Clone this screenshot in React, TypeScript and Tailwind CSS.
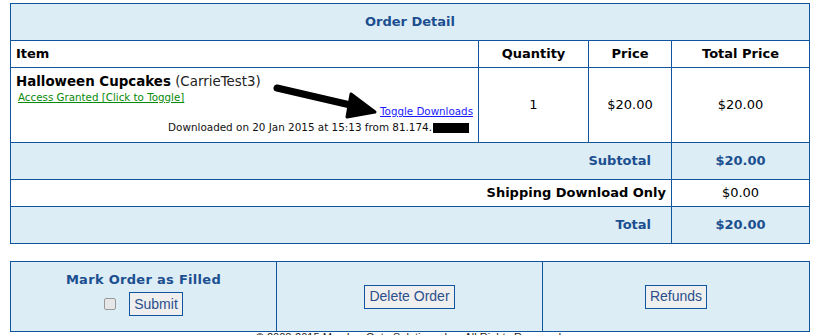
import React from "react";

const cell = "border border-[#0f55a0]";

const Arrow: React.FC = () => (
  <svg
    className="absolute left-[251px] top-[6px]"
    width="115"
    height="45"
    viewBox="0 0 115 45"
  >
    <path
      d="M10 14 L92 33"
      stroke="#000"
      strokeWidth="7"
      strokeLinecap="round"
      fill="none"
    />
    <path d="M84 20 L108 38 L80 43 Z" fill="#000" stroke="#000" strokeWidth="3" strokeLinejoin="round" />
  </svg>
);

const btn =
  "h-[24px] px-[4px] border border-[#0f55a0] bg-[#efefef] font-['Liberation_Sans',Arial,sans-serif] text-[14px] text-[#2a4f8c]";

const App: React.FC = () => {
  return (
    <div className="w-[818px] h-[335px] overflow-hidden bg-white font-['DejaVu_Sans',Verdana,sans-serif] text-[13px] text-black">
      <div className="pt-[3px] pl-[10px]">
        <table className="w-[800px] border-collapse">
          <tbody>
            <tr className="h-[37px] bg-[#ddedf6]">
              <td colSpan={4} className={`${cell} text-center font-bold text-[#1c4f8f]`}>
                Order Detail
              </td>
            </tr>
            <tr className="h-[27px] font-bold">
              <td className={`${cell} w-[468px] px-[5px] text-left`}>Item</td>
              <td className={`${cell} w-[110px] text-center`}>Quantity</td>
              <td className={`${cell} w-[83px] text-center`}>Price</td>
              <td className={`${cell} text-center`}>Total Price</td>
            </tr>
            <tr className="h-[75px]">
              <td className={`${cell} px-[5px] align-top`}>
                <div className="relative flex flex-col pt-[6px]">
                  <div className="leading-[16px] text-[13.4px]">
                    <span className="font-bold">Halloween Cupcakes</span>{" "}
                    <span className="text-[#222]">(CarrieTest3)</span>
                  </div>
                  <a
                    href="#"
                    className="ml-[2px] mt-[1px] text-[10.3px] leading-[12px] text-[#0a8a0a] underline self-start"
                  >
                    Access Granted [Click to Toggle]
                  </a>
                  <a
                    href="#"
                    className="mt-[2px] text-[10.3px] leading-[12px] text-[#1a1aff] underline self-end"
                  >
                    Toggle Downloads
                  </a>
                  <div className="mt-[4px] self-end text-[10.4px] leading-[13px] text-[#111] flex items-center">
                    Downloaded on 20 Jan 2015 at 15:13 from 81.174.
                    <span className="inline-block w-[36px] h-[10px] bg-black ml-[1px] mr-[4px]" />
                  </div>
                  <Arrow />
                </div>
              </td>
              <td className={`${cell} text-center`}>1</td>
              <td className={`${cell} text-center`}>$20.00</td>
              <td className={`${cell} text-center`}>$20.00</td>
            </tr>
            <tr className="h-[37px] bg-[#ddedf6] font-bold text-[#1c4f8f]">
              <td colSpan={3} className={`${cell} text-right pr-[20px]`}>
                Subtotal
              </td>
              <td className={`${cell} text-center`}>$20.00</td>
            </tr>
            <tr className="h-[27px]">
              <td colSpan={3} className={`${cell} text-right pr-[5px] font-bold`}>
                Shipping Download Only
              </td>
              <td className={`${cell} text-center`}>$0.00</td>
            </tr>
            <tr className="h-[37px] bg-[#ddedf6] font-bold text-[#1c4f8f]">
              <td colSpan={3} className={`${cell} text-right pr-[20px]`}>
                Total
              </td>
              <td className={`${cell} text-center`}>$20.00</td>
            </tr>
          </tbody>
        </table>

        <table className="mt-[17px] w-[800px] border-collapse bg-[#ddedf6]">
          <tbody>
            <tr className="h-[70px]">
              <td className={`${cell} w-[266px] text-center align-top pt-[10px]`}>
                <div className="font-bold text-[#1c4f8f] tracking-[0.3px] leading-[16px]">
                  Mark Order as Filled
                </div>
                <div className="mt-[4px] flex items-center justify-center gap-[13px]">
                  <span className="inline-block w-[12px] h-[12px] rounded-[2px] border border-[#9a9a9a] bg-[#e6e6e6]" />
                  <button className={btn}>Submit</button>
                </div>
              </td>
              <td className={`${cell} w-[266px] text-center`}>
                <button className={btn}>Delete Order</button>
              </td>
              <td className={`${cell} text-center`}>
                <button className={btn}>Refunds</button>
              </td>
            </tr>
          </tbody>
        </table>
        <div className="mt-[-1px] w-[800px] text-center font-['Liberation_Sans',Arial,sans-serif] text-[11px] leading-[13px] text-[#222]">
          © 2008-2015 Member Gate Solutions, Inc. All Rights Reserved.
        </div>
      </div>
    </div>
  );
};

export default App;
